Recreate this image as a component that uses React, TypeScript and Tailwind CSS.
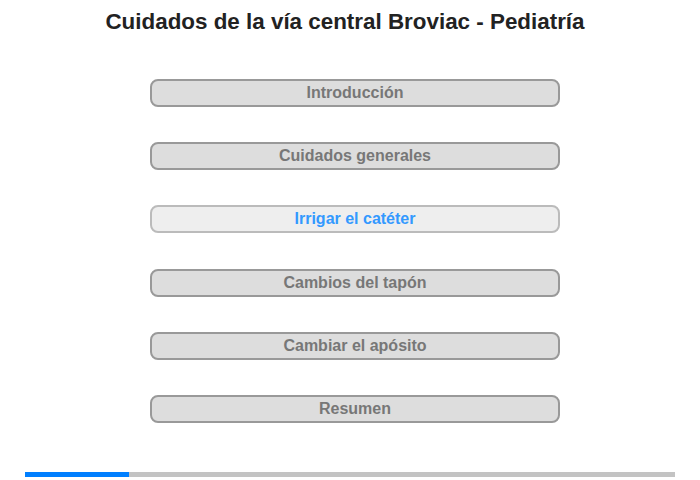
import React from "react";

const items = [
  "Introducción",
  "Cuidados generales",
  "Irrigar el catéter",
  "Cambios del tapón",
  "Cambiar el apósito",
  "Resumen",
];

export default function App() {
  return (
    <div
      className="w-[700px] h-[480px] bg-white flex flex-col"
      style={{ fontFamily: '"Liberation Sans", Arial, sans-serif' }}
    >
      <h1 className="w-[690px] pt-[9px] text-center text-[22.4px] leading-[26px] font-bold text-[#222]">
        Cuidados de la vía central Broviac - Pediatría
      </h1>
      <div className="mt-[44px] ml-[150px] w-[410px] flex flex-col gap-[35.2px]">
        {items.map((t, i) => {
          const active = i === 2;
          return (
            <div
              key={t}
              className={
                active
                  ? "h-[28px] rounded-[8px] border-2 border-[#bbb] bg-[#eee] text-[#3399ff] flex items-center justify-center text-[16px] font-bold"
                  : "h-[28px] rounded-[8px] border-2 border-[#999] bg-[#ddd] text-[#777] flex items-center justify-center text-[16px] font-bold"
              }
            >
              {t}
            </div>
          );
        })}
      </div>
      <div className="mt-[49px] ml-[25px] w-[650px] h-[5px] bg-[#c3c3c3] flex">
        <div className="w-[104px] h-full bg-[#007fff]" />
      </div>
    </div>
  );
}
